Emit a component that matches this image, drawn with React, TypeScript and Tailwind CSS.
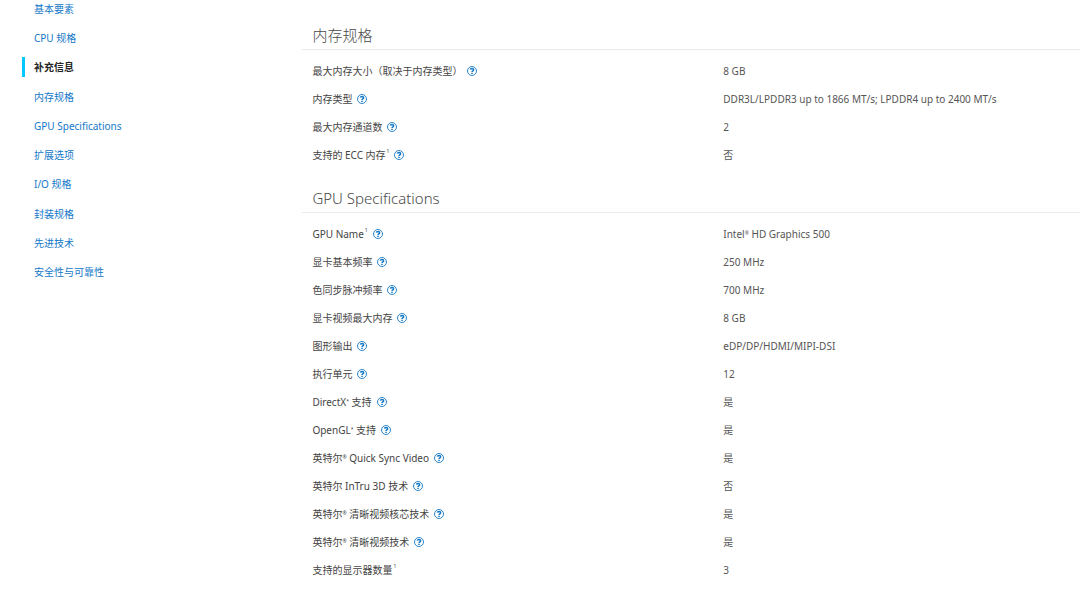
type Spec = {
  label: string;
  value: string;
  note?: boolean;
  help?: boolean;
};

type Section = {
  title: string;
  specs: Spec[];
};

const navItems = [
  '基本要素',
  'CPU 规格',
  '补充信息',
  '内存规格',
  'GPU Specifications',
  '扩展选项',
  'I/O 规格',
  '封装规格',
  '先进技术',
  '安全性与可靠性',
];

const activeItem = '补充信息';

const sections: Section[] = [
  {
    title: '内存规格',
    specs: [
      { label: '最大内存大小（取决于内存类型）', value: '8 GB' },
      { label: '内存类型', value: 'DDR3L/LPDDR3 up to 1866 MT/s; LPDDR4 up to 2400 MT/s' },
      { label: '最大内存通道数', value: '2' },
      { label: '支持的 ECC 内存', value: '否', note: true },
    ],
  },
  {
    title: 'GPU Specifications',
    specs: [
      { label: 'GPU Name', value: 'Intel® HD Graphics 500', note: true },
      { label: '显卡基本频率', value: '250 MHz' },
      { label: '色同步脉冲频率', value: '700 MHz' },
      { label: '显卡视频最大内存', value: '8 GB' },
      { label: '图形输出', value: 'eDP/DP/HDMI/MIPI-DSI' },
      { label: '执行单元', value: '12' },
      { label: 'DirectX* 支持', value: '是' },
      { label: 'OpenGL* 支持', value: '是' },
      { label: '英特尔® Quick Sync Video', value: '是' },
      { label: '英特尔 InTru 3D 技术', value: '否' },
      { label: '英特尔® 清晰视频核芯技术', value: '是' },
      { label: '英特尔® 清晰视频技术', value: '是' },
      { label: '支持的显示器数量', value: '3', note: true, help: false },
    ],
  },
];

function MarkedText({ text }: { text: string }) {
  return (
    <span>
      {text.split(/([®*])/).map((part, index) =>
        part === '®' || part === '*' ? (
          <span key={index} className="align-[3px] text-[5px] leading-none">
            {part}
          </span>
        ) : (
          part
        ),
      )}
    </span>
  );
}

function HelpButton({ label }: { label: string }) {
  return (
    <button type="button" aria-label={label} className="ml-[5px] shrink-0 text-[#1478c8]">
      <svg viewBox="0 0 20 20" className="size-2.5" fill="none" stroke="currentColor" aria-hidden="true">
        <circle cx="10" cy="10" r="9" strokeWidth="1.8" />
        <path d="M6.8 7.4C7 5.6 8.3 4.8 10.1 4.8c1.900 0 3.200 1 3.200 2.600 0 2.200-3.200 2.300-3.200 4.600" strokeWidth="3" />
        <path d="M10 13.400v2.500" strokeWidth="3" />
      </svg>
    </button>
  );
}

function SpecSection({ title, specs }: Section) {
  return (
    <section className="pt-4">
      <h2 className="h-7 border-b border-[#ebebeb] pl-2.5 text-[15px] leading-[27px] font-light text-[#4a4a4a]">
        {title}
      </h2>
      <table className="mt-[7px] w-full table-fixed border-collapse text-left text-[#555]">
        <tbody>
          {specs.map(({ label, value, note = false, help = true }) => (
            <tr key={label} className="h-7">
              <th scope="row" className="w-[54%] p-0 pl-2.5 font-normal text-[#444]">
                <div className="flex items-center">
                  <MarkedText text={label} />
                  {note && <sup className="top-0 ml-px self-start text-[5px] leading-2">1</sup>}
                  {help && <HelpButton label={label} />}
                </div>
              </th>
              <td className="p-0 pl-px">
                <MarkedText text={value} />
              </td>
            </tr>
          ))}
        </tbody>
      </table>
    </section>
  );
}

export default function App() {
  return (
    <div className="flex items-start overflow-hidden bg-white font-['Noto_Sans','Noto_Sans_CJK_SC',sans-serif] text-[10px] leading-4">
      <nav className="w-[28%] shrink-0 pl-[22px]">
        <ul className="-mt-1.5 grid h-[293px] grid-rows-10">
          {navItems.map((item) => (
            <li key={item} className="flex items-center">
              <a
                href="#"
                aria-current={item === activeItem ? 'true' : undefined}
                className={
                  item === activeItem
                    ? 'border-l-3 border-[#00c7fd] py-0.5 pl-[9px] font-bold text-[#262626]'
                    : 'border-l-3 border-transparent py-0.5 pl-[9px] text-[#1478c8]'
                }
              >
                {item}
              </a>
            </li>
          ))}
        </ul>
      </nav>
      <main className="min-w-0 flex-1 pt-1.5 pb-2.5">
        {sections.map((section) => (
          <SpecSection key={section.title} {...section} />
        ))}
      </main>
    </div>
  );
}
